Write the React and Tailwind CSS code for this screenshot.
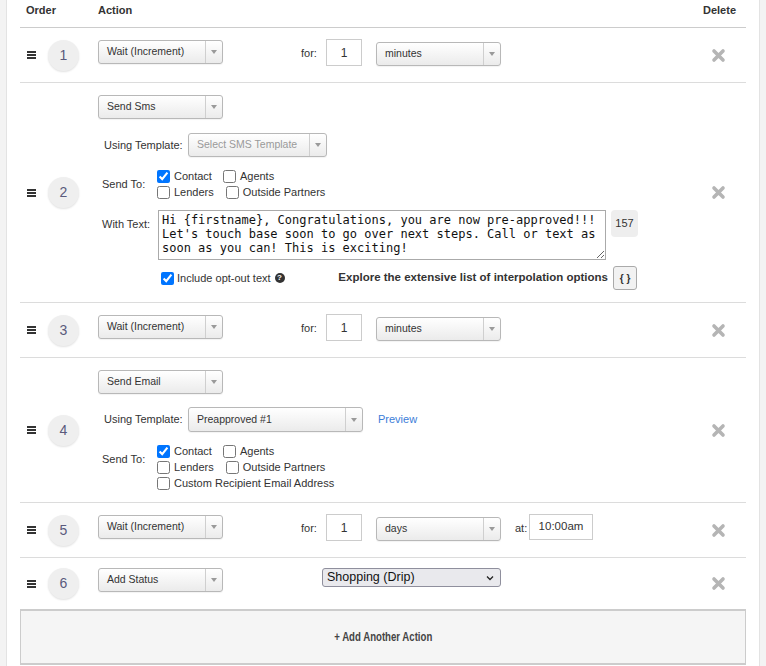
import React from 'react';

const Sel = ({ label, w = 'w-[125px]', h = 'h-[24px]', className = '', muted }) => (
  <div
    className={`flex ${w} ${h} ${className} items-stretch rounded-[3px] border border-[#b8b8b8] bg-linear-to-b from-white to-[#ebebeb] shadow-[0_1px_1px_rgba(0,0,0,0.05)]`}
  >
    <span className={`flex flex-1 items-center pl-[8px] text-[10.5px] ${muted ? 'text-[#9a9a9a]' : 'text-[#333]'}`}>
      {label}
    </span>
    <span className="flex w-[17px] items-center justify-center border-l border-[#cfcfcf]">
      <svg width="6" height="4" viewBox="0 0 6 4">
        <path d="M0 0h6L3 4z" fill="#9a9a9a" />
      </svg>
    </span>
  </div>
);

const Check = ({ on, className = '' }) => (
  <input
    type="checkbox"
    defaultChecked={on}
    className={`m-0 h-[13px] w-[13px] accent-[#0075ff] ${className}`}
  />
);

const Box = ({ on, label, className = '' }) => (
  <span className={`flex items-center ${className}`}>
    <Check on={on} />
    <span className="ml-[4px] text-[11px]">{label}</span>
  </span>
);

const XIcon = () => (
  <svg width="15" height="15" viewBox="0 0 15 15">
    <path d="M3 3l9 9M12 3l-9 9" stroke="#b5b5b5" strokeWidth="3.6" strokeLinecap="round" />
  </svg>
);

function Row({ n, children, last }) {
  return (
    <div className={`grid grid-cols-[78px_1fr_56px] ${last ? '' : 'border-b border-[#dcdcdc]'}`}>
      <div className="flex items-center pl-[7px]">
        <div className="flex w-[9px] flex-col gap-[1px]">
          <span className="h-[2px] bg-[#333]" />
          <span className="h-[2px] bg-[#333]" />
          <span className="h-[2px] bg-[#333]" />
        </div>
        <div className="ml-[12px] flex h-[31px] w-[31px] items-center justify-center rounded-full bg-[#efefef] text-[14px] text-[#5a5a7c] shadow-[0_1px_2px_rgba(0,0,0,0.12)]">
          {n}
        </div>
      </div>
      <div>{children}</div>
      <div className="flex items-center justify-center">
        <XIcon />
      </div>
    </div>
  );
}

function WaitRow({ unit, at }) {
  return (
    <div className="flex items-start pt-[11px] pb-[16px]">
      <Sel label="Wait (Increment)" className="mt-[1px]" />
      <span className="ml-[78px] mt-[7px] w-[25px] text-[11px] leading-[14px]">for:</span>
      <div className="flex h-[27px] w-[36px] items-center justify-center border border-[#cccccc] text-[12px]">1</div>
      <Sel label={unit} className="ml-[14px] mt-[3px]" />
      {at && (
        <>
          <span className="ml-[14px] mt-[7px] w-[14px] text-[11px] leading-[14px]">at:</span>
          <div className="flex h-[26px] w-[64px] items-center justify-center border border-[#cccccc] text-[11.5px]">
            {at}
          </div>
        </>
      )}
    </div>
  );
}

function SendTo({ custom }) {
  return (
    <div className="mt-[11px] flex">
      <div className="ml-[4px] mt-[9px] w-[55px] self-start text-[11px] leading-[14px]">Send To:</div>
      <div className="flex flex-col">
        <div className="flex h-[16px] items-center">
          <Box on label="Contact" />
          <Box label="Agents" className="ml-[11px]" />
        </div>
        <div className="flex h-[16px] items-center">
          <Box label="Lenders" />
          <Box label="Outside Partners" className="ml-[12px]" />
        </div>
        {custom && (
          <div className="flex h-[16px] items-center">
            <Box label="Custom Recipient Email Address" />
          </div>
        )}
      </div>
    </div>
  );
}

export default function App() {
  return (
    <div className="flex min-h-[666px] bg-white font-['Liberation_Sans',Arial,sans-serif] text-[#333]">
      <div className="w-[7px] border-r border-[#e3e3e3] bg-[#f3f3f3]" />
      <div className="flex-1 px-[13px]">
        {/* header */}
        <div className="grid h-[28px] grid-cols-[78px_1fr_56px] border-b border-[#cccccc] pt-[3px] text-[11px] font-bold leading-[14px]">
          <span className="pl-[6px]">Order</span>
          <span>Action</span>
          <span className="pl-[13px]">Delete</span>
        </div>

        <Row n="1">
          <WaitRow unit="minutes" />
        </Row>

        <Row n="2">
          <div className="pt-[12px] pb-[12px]">
            <Sel label="Send Sms" />
            <div className="mt-[14px] flex items-center">
              <span className="ml-[6px] w-[84px] text-[11px]">Using Template:</span>
              <Sel label="Select SMS Template" w="w-[139px]" muted />
            </div>
            <SendTo />
            <div className="mt-[10px] flex items-start">
              <span className="ml-[4px] mt-[7px] w-[56px] text-[11px] leading-[14px]">With Text:</span>
              <textarea
                readOnly
                className="h-[50px] w-[448px] resize-y border border-[#aaaaaa] px-[3px] py-[2px] font-['DejaVu_Sans_Mono',monospace] text-[12px] leading-[14px] text-[#111] outline-none"
                value="Hi {firstname}, Congratulations, you are now pre-approved!!! Let's touch base soon to go over next steps. Call or text as soon as you can! This is exciting!"
              />
              <div className="ml-[5px] flex h-[27px] w-[27px] items-center justify-center rounded-[4px] bg-[#eeeeee] text-[11px]">
                157
              </div>
            </div>
            <div className="mt-[6px] flex h-[24px] w-[539px] items-center justify-between">
              <div className="ml-[63px] flex items-center">
                <Check on />
                <span className="ml-[3px] text-[11px]">Include opt-out text</span>
                <span className="ml-[4px] flex h-[10px] w-[10px] items-center justify-center rounded-full bg-[#333] text-[8px] font-bold leading-none text-white">
                  ?
                </span>
              </div>
              <div className="flex items-center">
                <span className="text-[11.5px] font-bold">Explore the extensive list of interpolation options</span>
                <div className="ml-[5px] flex h-[24px] w-[24px] items-center justify-center rounded-[3px] border border-[#aaaaaa] bg-[#f2f2f2] text-[10px] font-bold">
                  {'{ }'}
                </div>
              </div>
            </div>
          </div>
        </Row>

        <Row n="3">
          <WaitRow unit="minutes" />
        </Row>

        <Row n="4">
          <div className="pt-[12px] pb-[11px]">
            <Sel label="Send Email" />
            <div className="mt-[13px] flex items-center">
              <span className="ml-[6px] w-[84px] text-[11px]">Using Template:</span>
              <Sel label="Preapproved #1" w="w-[175px]" h="h-[25px]" />
              <span className="ml-[15px] text-[11px] text-[#3b7dd8]">Preview</span>
            </div>
            <SendTo custom />
          </div>
        </Row>

        <Row n="5">
          <WaitRow unit="days" at="10:00am" />
        </Row>

        <Row n="6" last>
          <div className="flex items-start pt-[10px] pb-[17px]">
            <Sel label="Add Status" />
            <div className="ml-[99px] flex h-[19px] w-[179px] items-center justify-between rounded-[3px] border border-[#8f8f9d] bg-[#e9e9ed] pl-[4px] pr-[6px] text-[12.5px] text-[#111]">
              <span>Shopping (Drip)</span>
              <svg width="8" height="6" viewBox="0 0 8 6">
                <path d="M1 1.5l3 3 3-3" stroke="#222" strokeWidth="1.3" fill="none" />
              </svg>
            </div>
          </div>
        </Row>

        <div className="flex h-[56px] items-center justify-center border-x border-y-2 border-[#cccccc] bg-[#f5f5f5]">
          <span className="inline-block scale-x-[0.74] text-[13px] font-bold text-[#444]">+ Add Another Action</span>
        </div>
      </div>
      <div className="w-[7px] border-l border-[#e3e3e3] bg-[#f3f3f3]" />
    </div>
  );
}
